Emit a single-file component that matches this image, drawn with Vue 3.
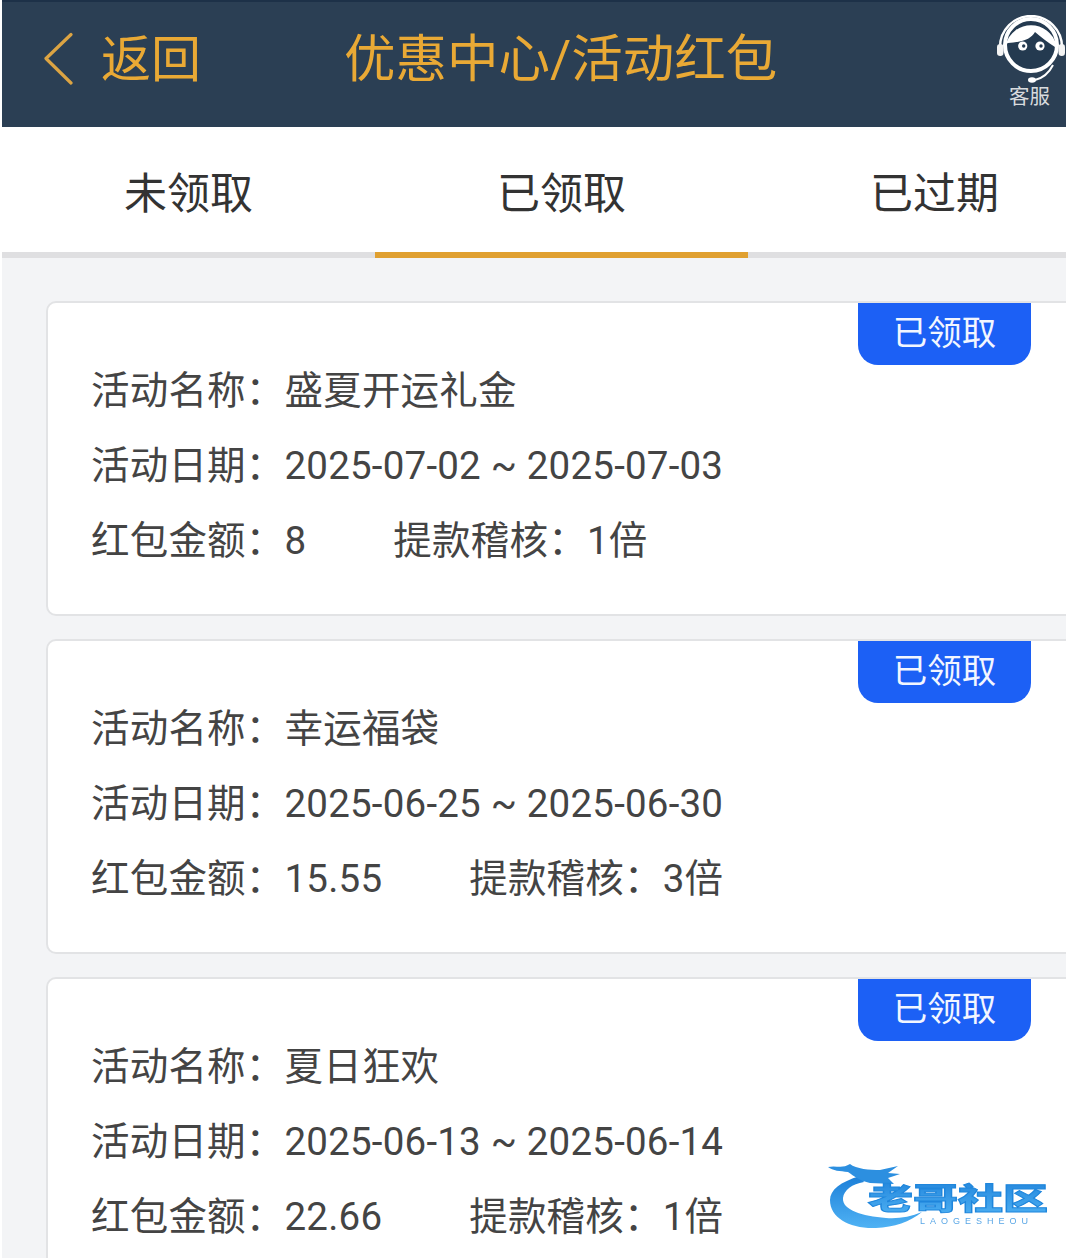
<script setup>
const tabs = [
  { label: '未领取', active: false },
  { label: '已领取', active: true },
  { label: '已过期', active: false },
]
const cards = [
  { name: '盛夏开运礼金', date: '2025-07-02 ~ 2025-07-03', amount: '8', audit: '1倍' },
  { name: '幸运福袋', date: '2025-06-25 ~ 2025-06-30', amount: '15.55', audit: '3倍' },
  { name: '夏日狂欢', date: '2025-06-13 ~ 2025-06-14', amount: '22.66', audit: '1倍' },
]
</script>

<template>
  <div class="page">
    <header class="header">
      <div class="back">
        <svg class="chevron" width="30" height="54" viewBox="0 0 30 54">
          <path d="M28 2.500 L3 26.500 L28 51" fill="none" stroke="#dca443" stroke-width="3.200" stroke-linecap="round" stroke-linejoin="round" />
        </svg>
        <span class="back-text">返回</span>
      </div>
      <h1 class="title">优惠中心/活动红包</h1>
      <div class="service">
        <svg width="72" height="70" viewBox="0 0 72 70">
          <path d="M5 32 A31 31 0 0 1 67 32" fill="none" stroke="#fff" stroke-width="2.400" />
          <rect x="2" y="29" width="6.500" height="12" rx="3.200" fill="#f4f4f4" />
          <rect x="63.500" y="29" width="6.500" height="12" rx="3.200" fill="#f4f4f4" />
          <circle cx="36" cy="30" r="26" fill="#243a50" stroke="#fff" stroke-width="4" />
          <path d="M11 29 A26 26 0 0 1 61 29 L60 32 C52 27 46 22 40 17 C36 24 28 27 13 28 Z" fill="#fff" />
          <circle cx="27.700" cy="31" r="4.600" fill="#fff" />
          <circle cx="45" cy="31" r="4.600" fill="#fff" />
          <circle cx="28.700" cy="31" r="1.700" fill="#243a50" />
          <circle cx="46" cy="31" r="1.700" fill="#243a50" />
          <path d="M58 50 Q52 62 40 65" fill="none" stroke="#fff" stroke-width="2" />
          <ellipse cx="37" cy="65" rx="4" ry="2.800" fill="#fff" />
        </svg>
        <span class="service-text">客服</span>
      </div>
    </header>

    <nav class="tabs">
      <div v-for="tab in tabs" :key="tab.label" class="tab" :class="{ active: tab.active }">{{ tab.label }}</div>
    </nav>

    <main class="list">
      <section v-for="card in cards" :key="card.name" class="card">
        <div class="badge">已领取</div>
        <div class="row">活动名称：<span>{{ card.name }}</span></div>
        <div class="row">活动日期：<span>{{ card.date }}</span></div>
        <div class="row">
          <span class="pair">红包金额：<span>{{ card.amount }}</span></span>
          <span>提款稽核：<span>{{ card.audit }}</span></span>
        </div>
      </section>
    </main>

    <svg class="watermark" width="226" height="76" viewBox="0 0 226 76">
      <defs>
        <linearGradient id="wm" x1="0" y1="0" x2="0" y2="1">
          <stop offset="0" stop-color="#1c7fd8" />
          <stop offset="1" stop-color="#4fb2f4" />
        </linearGradient>
      </defs>
      <path d="M34 14 C14 20 4 28 4 38 C4 56 24 67 50 66 C68 65 84 60 96 50 C84 55 72 57 60 56 C36 54 16 48 17 36 C18 28 26 22 38 20 Z" fill="url(#wm)" />
      <path d="M2 5 C10 3 16 7 24 2 C30 7 44 8 54 8 L72 4 L62 11 L74 12 L62 16 L68 22 L44 21 C34 19 28 14 22 10 C14 9 7 9 2 5 Z" fill="#2c8fe0" />
      <text class="wm-title" x="42" y="47" textLength="180" lengthAdjust="spacingAndGlyphs">老哥社区</text>
      <text class="wm-sub" x="94" y="62" textLength="108">LAOGESHEOU</text>
    </svg>
  </div>
</template>

<style>
html, body {
  margin: 0;
  background: #fff;
}
</style>

<style scoped>
.page {
  position: relative;
  width: 1066px;
  height: 1258px;
  overflow: hidden;
  box-sizing: border-box;
  padding-left: 2px;
  background: #fff;
  font-family: Roboto, "Noto Sans CJK SC", sans-serif;
}
.header {
  display: flex;
  align-items: center;
  height: 127px;
  box-sizing: border-box;
  padding-bottom: 12px;
  border-top: 2px solid #1d3148;
  background: #2b3f54;
  color: #e9a935;
}
.back {
  display: flex;
  align-items: center;
  width: 342px;
  flex: none;
  padding-left: 41px;
  box-sizing: border-box;
}
.back-text {
  margin-left: 28px;
  margin-bottom: 8px;
  font-size: 50px;
}
.title {
  margin: 0 0 8px;
  flex: none;
  font-size: 51.500px;
  font-weight: 400;
}
.service {
  display: flex;
  flex-direction: column;
  align-items: center;
  align-self: flex-start;
  margin-left: auto;
  margin-top: 13px;
  margin-right: -1px;
  width: 72px;
}
.service-text {
  margin-top: -1px;
  margin-right: 3px;
  color: #d8dbde;
  font-size: 20.500px;
  line-height: 26px;
}
.tabs {
  display: flex;
  width: 1119px;
  height: 131px;
  box-sizing: border-box;
  border-bottom: 6px solid #dfdfe1;
  background: #fff;
}
.tab {
  flex: 1;
  margin-bottom: -6px;
  padding-top: 38px;
  box-sizing: border-box;
  border-bottom: 6px solid transparent;
  color: #333;
  font-size: 43px;
  line-height: 58px;
  text-align: center;
}
.tab.active {
  border-bottom-color: #e0a030;
}
.list {
  display: flex;
  flex-direction: column;
  gap: 23px;
  height: 1000px;
  padding: 43px 0 0 44px;
  background: #f3f4f6;
}
.card {
  position: relative;
  flex: none;
  box-sizing: border-box;
  width: 1060px;
  height: 315px;
  padding-top: 49.500px;
  padding-left: 43px;
  border: 2px solid #e2e3e5;
  border-radius: 10px;
  background: #fff;
  color: #444;
  font-size: 38.500px;
  letter-spacing: 0.200px;
}
.badge {
  position: absolute;
  top: 0;
  left: 810px;
  width: 173px;
  height: 62px;
  border-radius: 0 0 20px 20px;
  background: #1c60f5;
  color: #f2f6ff;
  font-size: 34.500px;
  letter-spacing: 0;
  line-height: 60px;
  text-align: center;
}
.row {
  height: 75px;
  line-height: 75px;
  white-space: nowrap;
}
.pair {
  display: inline-block;
  margin-right: 87px;
}
.watermark {
  position: absolute;
  left: 826px;
  top: 1162px;
  filter: blur(0.500px);
}
.wm-title {
  fill: url(#wm);
  stroke: #1f86dc;
  stroke-width: 1px;
  font-family: "Noto Sans CJK SC", sans-serif;
  font-size: 30px;
  font-weight: 900;
}
.wm-sub {
  fill: #5aa7e6;
  font-family: "Liberation Sans", sans-serif;
  font-size: 9px;
}
</style>
